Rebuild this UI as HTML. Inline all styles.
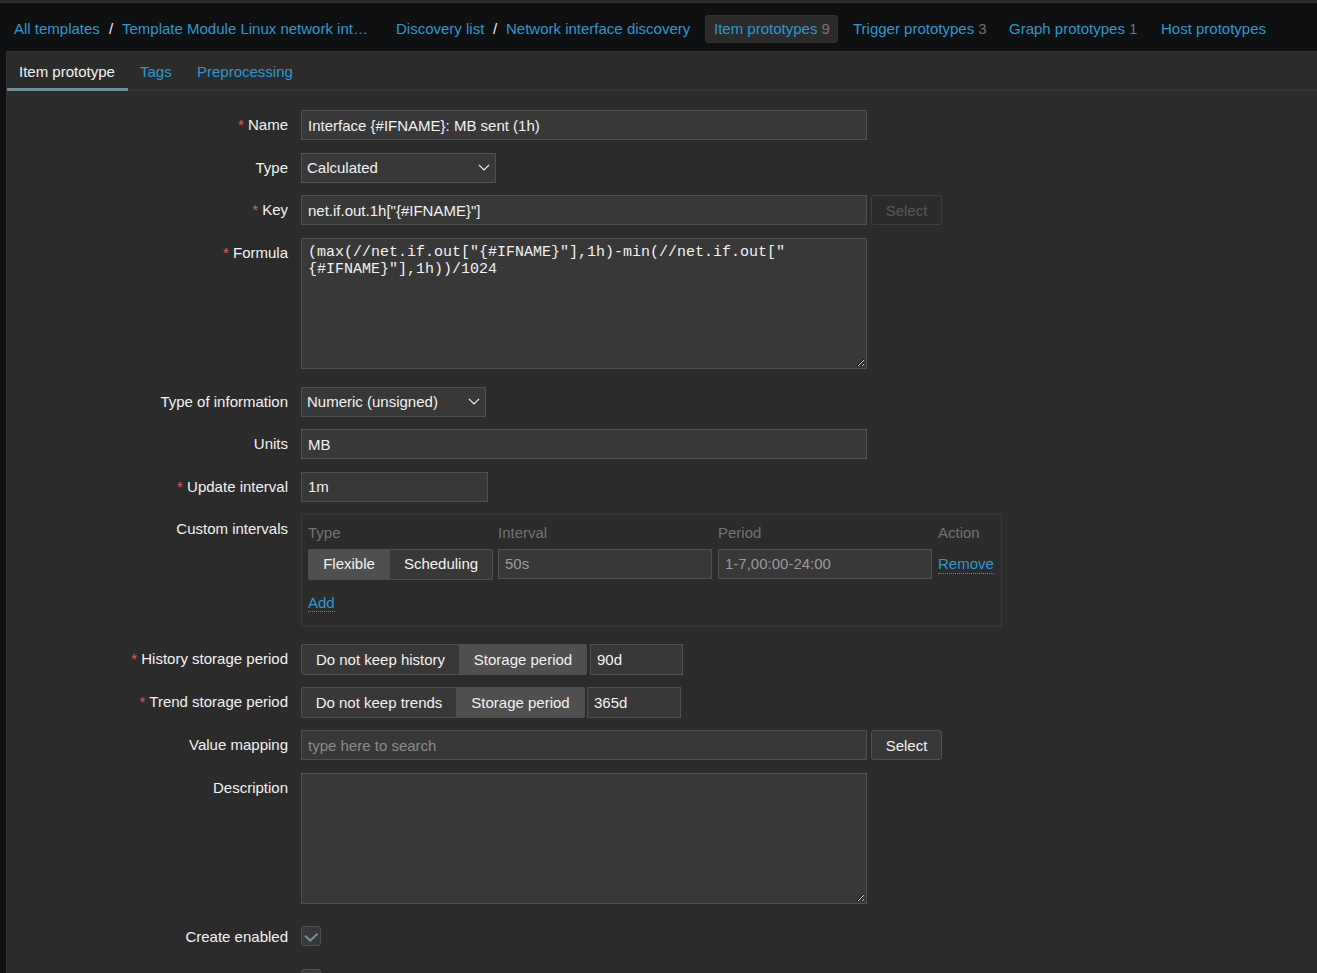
<!DOCTYPE html>
<html lang="en">
<head>
<meta charset="utf-8">
<title>Configuration of item prototypes</title>
<style>
*{box-sizing:border-box;margin:0;padding:0}
html,body{width:1317px;height:973px;overflow:hidden}
body{background:#0e1012;color:#f2f2f2;font-family:"Liberation Sans",Arial,sans-serif;font-size:15px;line-height:21px;position:relative}
a{color:#3097cf;text-decoration:none}
.abs{position:absolute}
.topstrip{left:0;top:0;width:1317px;height:3px;background:#2b2b2b;border-bottom:1px solid #323232}
.nav{top:18px;height:21px;white-space:nowrap}
.nav .sep{color:#f2f2f2}
.navsel{left:705px;top:15px;width:133px;height:28px;background:#2b2b2b;border:1px solid #303030;border-radius:3px}
.sup{color:#737373;margin-left:4px}
.panel{left:6px;top:51px;width:1320px;height:940px;background:#2b2b2b;border:1px solid #303030}
.tabline{left:7px;top:90px;width:1320px;height:1px;background:#383838}
.tabsel{left:7px;top:88px;width:121px;height:3px;background:#6f8a97}
.tab{top:61px;height:21px;white-space:nowrap}
.lbl{left:0;width:288px;text-align:right;height:21px;white-space:nowrap}
.req{color:#e45959}
.inp{background:#383838;border:1px solid #4f4f4f;height:30px;padding:4px 6px 3px 6px;white-space:nowrap;overflow:hidden}
.ro{color:#9a9a9a}
.ph{color:#8a8a8a}
.btn{background:#383838;border:1px solid #4f4f4f;border-radius:3px;height:30px;text-align:center;line-height:28px;padding-top:1px}
.btn.dis{background:transparent;border-color:#3d3d3d;color:#575757}
.seg{height:31px;border:1px solid #4f4f4f;text-align:center;line-height:28px;background:#383838;padding-top:0}
.seg.on{background:#4f4f4f}
.seg.lo{padding-top:1px}
.mono{font-family:"Liberation Mono","DejaVu Sans Mono",monospace;font-size:15px;line-height:17px;white-space:pre}
.th{color:#737373}
.dotted{border-bottom:1px dotted #3097cf}
.cb{width:20px;height:20px;border:1px solid #4f4f4f;border-radius:3px;background:#383838}
</style>
</head>
<body>
<div class="abs topstrip"></div>

<!-- breadcrumbs -->
<div class="abs nav" style="left:14px"><a>All templates</a></div>
<div class="abs nav sep" style="left:109px"><span class="sep">/</span></div>
<div class="abs nav" style="left:122px"><a>Template Module Linux network int…</a></div>
<div class="abs nav" style="left:396px"><a>Discovery list</a></div>
<div class="abs nav sep" style="left:493px"><span class="sep">/</span></div>
<div class="abs nav" style="left:506px"><a>Network interface discovery</a></div>
<div class="abs navsel"></div>
<div class="abs nav" style="left:714px"><a>Item prototypes</a><span class="sup">9</span></div>
<div class="abs nav" style="left:853px"><a>Trigger prototypes</a><span class="sup">3</span></div>
<div class="abs nav" style="left:1009px"><a>Graph prototypes</a><span class="sup">1</span></div>
<div class="abs nav" style="left:1161px"><a>Host prototypes</a></div>

<!-- panel -->
<div class="abs panel"></div>
<div class="abs tabline"></div>
<div class="abs tabsel"></div>
<div class="abs tab" style="left:19px">Item prototype</div>
<div class="abs tab" style="left:140px"><a>Tags</a></div>
<div class="abs tab" style="left:197px"><a>Preprocessing</a></div>

<!-- Name -->
<div class="abs lbl" style="top:114px"><span class="req">*</span> Name</div>
<div class="abs inp" style="left:301px;top:110px;width:566px">Interface {#IFNAME}: MB sent (1h)</div>

<!-- Type -->
<div class="abs lbl" style="top:157px">Type</div>
<div class="abs inp" style="left:301px;top:153px;width:195px;padding-left:5px;padding-top:3px">Calculated</div>
<svg class="abs" style="left:477px;top:163px" width="14" height="10" viewBox="0 0 14 10"><path d="M1.9 1.9 L7 7 L12.1 1.9" fill="none" stroke="#f2f2f2" stroke-width="1.2"/></svg>

<!-- Key -->
<div class="abs lbl" style="top:199px"><span class="req">*</span> Key</div>
<div class="abs inp" style="left:301px;top:195px;width:566px">net.if.out.1h["{#IFNAME}"]</div>
<div class="abs btn dis" style="left:871px;top:195px;width:71px">Select</div>

<!-- Formula -->
<div class="abs lbl" style="top:242px"><span class="req">*</span> Formula</div>
<div class="abs inp mono" style="left:301px;top:238px;width:566px;height:131px;padding:5px 6px">(max(//net.if.out["{#IFNAME}"],1h)-min(//net.if.out["
{#IFNAME}"],1h))/1024</div>
<svg class="abs rz" style="left:857px;top:359px" width="7" height="7" viewBox="0 0 7 7" shape-rendering="crispEdges"><path fill="#0c0c0c" d="M0 6h1v1h-1zM1 5h1v1h-1zM2 4h1v1h-1zM3 3h1v1h-1zM4 2h1v1h-1zM5 1h1v1h-1zM6 0h1v1h-1zM4 6h1v1h-1zM5 5h1v1h-1zM6 4h1v1h-1z"/><path fill="#d4d4d4" d="M1 6h1v1h-1zM2 5h1v1h-1zM3 4h1v1h-1zM4 3h1v1h-1zM5 2h1v1h-1zM6 1h1v1h-1zM5 6h1v1h-1zM6 5h1v1h-1z"/></svg>

<!-- Type of information -->
<div class="abs lbl" style="top:391px">Type of information</div>
<div class="abs inp" style="left:301px;top:387px;width:185px;padding-left:5px;padding-top:3px">Numeric (unsigned)</div>
<svg class="abs" style="left:467px;top:397px" width="14" height="10" viewBox="0 0 14 10"><path d="M1.9 1.9 L7 7 L12.1 1.9" fill="none" stroke="#f2f2f2" stroke-width="1.2"/></svg>

<!-- Units -->
<div class="abs lbl" style="top:433px">Units</div>
<div class="abs inp" style="left:301px;top:429px;width:566px">MB</div>

<!-- Update interval -->
<div class="abs lbl" style="top:476px"><span class="req">*</span> Update interval</div>
<div class="abs inp" style="left:301px;top:472px;width:187px;padding-top:3px">1m</div>

<!-- Custom intervals -->
<div class="abs lbl" style="top:518px">Custom intervals</div>
<div class="abs" style="left:301px;top:514px;width:701px;height:113px;border:1px solid #383838"></div>
<div class="abs th" style="left:308px;top:522px">Type</div>
<div class="abs th" style="left:498px;top:522px">Interval</div>
<div class="abs th" style="left:718px;top:522px">Period</div>
<div class="abs th" style="left:938px;top:522px">Action</div>
<div class="abs seg on" style="left:308px;top:549px;width:82px;border-radius:2px 0 0 2px">Flexible</div>
<div class="abs seg" style="left:389px;top:549px;width:104px;border-radius:0 2px 2px 0">Scheduling</div>
<div class="abs inp ro" style="left:498px;top:549px;width:214px;padding-top:3px">50s</div>
<div class="abs inp ro" style="left:718px;top:549px;width:214px;padding-top:3px">1-7,00:00-24:00</div>
<div class="abs" style="left:938px;top:553px"><a class="dotted" style="padding-bottom:1px">Remove</a></div>
<div class="abs" style="left:308px;top:592px"><a class="dotted">Add</a></div>

<!-- History storage period -->
<div class="abs lbl" style="top:648px"><span class="req">*</span> History storage period</div>
<div class="abs seg lo" style="left:301px;top:644px;width:159px;border-radius:2px 0 0 2px">Do not keep history</div>
<div class="abs seg on lo" style="left:459px;top:644px;width:128px;border-radius:0 2px 2px 0">Storage period</div>
<div class="abs inp" style="left:590px;top:644px;width:93px;height:31px">90d</div>

<!-- Trend storage period -->
<div class="abs lbl" style="top:691px"><span class="req">*</span> Trend storage period</div>
<div class="abs seg lo" style="left:301px;top:687px;width:156px;border-radius:2px 0 0 2px">Do not keep trends</div>
<div class="abs seg on lo" style="left:456px;top:687px;width:129px;border-radius:0 2px 2px 0">Storage period</div>
<div class="abs inp" style="left:587px;top:687px;width:94px;height:31px">365d</div>

<!-- Value mapping -->
<div class="abs lbl" style="top:734px">Value mapping</div>
<div class="abs inp ph" style="left:301px;top:730px;width:566px">type here to search</div>
<div class="abs btn" style="left:871px;top:730px;width:71px">Select</div>

<!-- Description -->
<div class="abs lbl" style="top:777px">Description</div>
<div class="abs inp" style="left:301px;top:773px;width:566px;height:131px"></div>
<svg class="abs rz" style="left:857px;top:894px" width="7" height="7" viewBox="0 0 7 7" shape-rendering="crispEdges"><path fill="#0c0c0c" d="M0 6h1v1h-1zM1 5h1v1h-1zM2 4h1v1h-1zM3 3h1v1h-1zM4 2h1v1h-1zM5 1h1v1h-1zM6 0h1v1h-1zM4 6h1v1h-1zM5 5h1v1h-1zM6 4h1v1h-1z"/><path fill="#d4d4d4" d="M1 6h1v1h-1zM2 5h1v1h-1zM3 4h1v1h-1zM4 3h1v1h-1zM5 2h1v1h-1zM6 1h1v1h-1zM5 6h1v1h-1zM6 5h1v1h-1z"/></svg>

<!-- Create enabled -->
<div class="abs lbl" style="top:926px">Create enabled</div>
<div class="abs cb" style="left:301px;top:926px"></div>
<svg class="abs" style="left:301px;top:926px" width="20" height="20" viewBox="0 0 20 20"><path d="M4.1 9.6 L9.2 14.7 L16.5 7.7" fill="none" stroke="#7393a3" stroke-width="2"/></svg>

<!-- Discover -->
<div class="abs lbl" style="top:969px">Discover</div>
<div class="abs cb" style="left:301px;top:969px"></div>
</body>
</html>
